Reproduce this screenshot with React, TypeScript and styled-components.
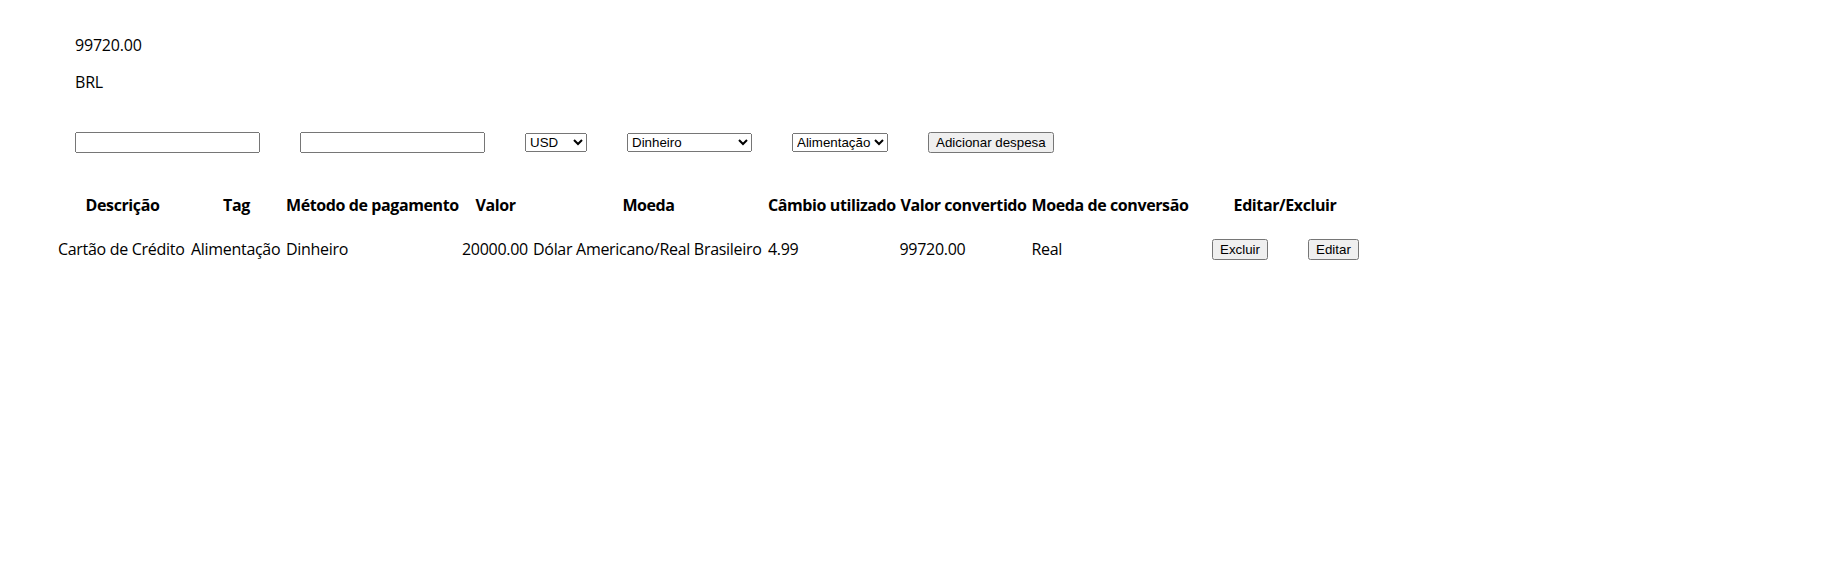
import React from "react";
import styled, { createGlobalStyle } from "styled-components";

const GlobalStyle = createGlobalStyle`
  html, body {
    margin: 0;
    padding: 0;
    background: #ffffff;
    color: #000000;
    font-family: "Open Sans", "Noto Sans", sans-serif;
    font-size: 16px;
  }
`;

const Page = styled.div`
  display: flex;
  flex-direction: column;
  padding-top: 36px;
`;

const Summary = styled.header`
  display: flex;
  flex-direction: column;
  gap: 18px;
  padding-left: 75px;
`;

const SummaryLine = styled.p`
  margin: 0;
  line-height: 19px;
  letter-spacing: -0.2px;
`;

const ExpenseForm = styled.form`
  display: flex;
  align-items: center;
  gap: 40px;
  margin-top: 40px;
  padding-left: 75px;
`;

const controlFont = `
  font-family: "Liberation Sans", Arial, sans-serif;
  font-size: 13.333px;
`;

const TextField = styled.input`
  ${controlFont}
  box-sizing: border-box;
  width: 185px;
  height: 21px;
  margin: 0;
`;

const Picker = styled.select<{ $width: number }>`
  ${controlFont}
  box-sizing: border-box;
  width: ${(p) => p.$width}px;
  height: 19px;
  margin: 0;
`;

const ActionButton = styled.button`
  ${controlFont}
  margin: 0;
`;

const ExpenseTable = styled.table`
  margin-top: 40px;
  margin-left: 55px;
  width: 1327px;
  table-layout: fixed;
  border-spacing: 2px;
  line-height: 19px;
`;

const HeadCell = styled.th<{ $width: number }>`
  width: ${(p) => p.$width}px;
  padding: 1px;
  font-weight: 700;
  text-align: center;
  white-space: nowrap;
  letter-spacing: -0.4px;
`;

const BodyCell = styled.td`
  padding: 21px 1px 1px;
  text-align: left;
  vertical-align: middle;
  white-space: nowrap;
  letter-spacing: -0.3px;
`;

const ActionGroup = styled.div`
  display: flex;
  align-items: center;
  gap: 40px;
  padding-left: 21px;
  letter-spacing: normal;
`;

const columns: { label: string; width: number }[] = [
  { label: "Descrição", width: 129 },
  { label: "Tag", width: 91 },
  { label: "Método de pagamento", width: 172 },
  { label: "Valor", width: 67 },
  { label: "Moeda", width: 231 },
  { label: "Câmbio utilizado", width: 127.5 },
  { label: "Valor convertido", width: 128 },
  { label: "Moeda de conversão", width: 155.5 },
  { label: "Editar/Excluir", width: 188 },
];

const expenses = [
  {
    id: 0,
    description: "Cartão de Crédito",
    tag: "Alimentação",
    method: "Dinheiro",
    value: "20000.00",
    currency: "Dólar Americano/Real Brasileiro",
    rate: "4.99",
    converted: "99720.00",
    target: "Real",
  },
];

const currencies = ["USD", "CAD", "EUR", "GBP", "ARS", "BTC", "LTC", "JPY", "CHF", "AUD", "CNY", "ILS", "ETH", "XRP"];
const methods = ["Dinheiro", "Cartão de crédito", "Cartão de débito"];
const tags = ["Alimentação", "Lazer", "Trabalho", "Transporte", "Saúde"];

export default function App() {
  return (
    <>
      <GlobalStyle />
      <Page>
        <Summary>
          <SummaryLine>99720.00</SummaryLine>
          <SummaryLine>BRL</SummaryLine>
        </Summary>
        <ExpenseForm onSubmit={(e) => e.preventDefault()}>
          <TextField type="text" aria-label="Valor" />
          <TextField type="text" aria-label="Descrição" />
          <Picker $width={62} defaultValue="USD" aria-label="Moeda">
            {currencies.map((c) => (
              <option key={c} value={c}>
                {c}
              </option>
            ))}
          </Picker>
          <Picker $width={125} defaultValue="Dinheiro" aria-label="Método de pagamento">
            {methods.map((m) => (
              <option key={m} value={m}>
                {m}
              </option>
            ))}
          </Picker>
          <Picker $width={96} defaultValue="Alimentação" aria-label="Tag">
            {tags.map((t) => (
              <option key={t} value={t}>
                {t}
              </option>
            ))}
          </Picker>
          <ActionButton type="submit">Adicionar despesa</ActionButton>
        </ExpenseForm>
        <ExpenseTable>
          <thead>
            <tr>
              {columns.map((c) => (
                <HeadCell key={c.label} $width={c.width}>
                  {c.label}
                </HeadCell>
              ))}
            </tr>
          </thead>
          <tbody>
            {expenses.map((e) => (
              <tr key={e.id}>
                <BodyCell>{e.description}</BodyCell>
                <BodyCell>{e.tag}</BodyCell>
                <BodyCell>{e.method}</BodyCell>
                <BodyCell>{e.value}</BodyCell>
                <BodyCell>{e.currency}</BodyCell>
                <BodyCell>{e.rate}</BodyCell>
                <BodyCell>{e.converted}</BodyCell>
                <BodyCell>{e.target}</BodyCell>
                <BodyCell>
                  <ActionGroup>
                    <ActionButton type="button">Excluir</ActionButton>
                    <ActionButton type="button">Editar</ActionButton>
                  </ActionGroup>
                </BodyCell>
              </tr>
            ))}
          </tbody>
        </ExpenseTable>
      </Page>
    </>
  );
}
